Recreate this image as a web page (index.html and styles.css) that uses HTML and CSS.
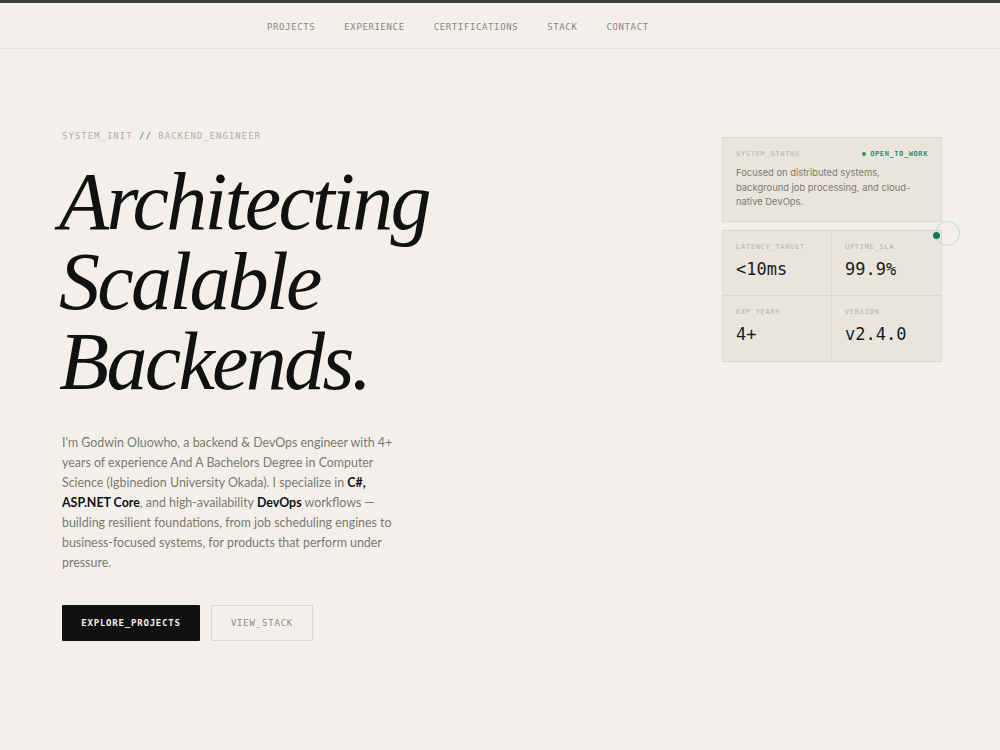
FILE: index.html
```html
<!DOCTYPE html>
<html>
<head>
<meta charset="utf-8">
<link rel="stylesheet" href="styles.css">
</head>
<body>
<div class="topbar"></div>
<header class="nav">
  <a>PROJECTS</a>
  <a>EXPERIENCE</a>
  <a>CERTIFICATIONS</a>
  <a>STACK</a>
  <a>CONTACT</a>
</header>
<main class="hero">
  <section class="intro">
    <div class="eyebrow">SYSTEM_INIT <span class="slash">//</span> BACKEND_ENGINEER</div>
    <h1 class="title">Architecting<br>Scalable<br>Backends.</h1>
    <p class="lead">I'm Godwin Oluowho, a backend &amp; DevOps engineer with 4+ years of experience And A Bachelors Degree in Computer Science (Igbinedion University Okada). I specialize in <b>C#,</b> <b>ASP.NET Core</b>, and high-availability <b>DevOps</b> workflows — building resilient foundations, from job scheduling engines to business-focused systems, for products that perform under pressure.</p>
    <div class="actions">
      <a class="btn primary">EXPLORE_PROJECTS</a>
      <a class="btn ghost">VIEW_STACK</a>
    </div>
  </section>
  <aside class="panel">
    <div class="status">
      <div class="status-head">
        <span class="label">SYSTEM_STATUS</span>
        <span class="open"><span class="dot"></span>OPEN_TO_WORK</span>
      </div>
      <p class="status-text">Focused on distributed systems, background job processing, and cloud-native DevOps.</p>
    </div>
    <div class="stats">
      <div class="stat"><span class="label">LATENCY_TARGET</span><span class="value">&lt;10ms</span></div>
      <div class="stat"><span class="label">UPTIME_SLA</span><span class="value">99.9%</span></div>
      <div class="stat"><span class="label">EXP_YEARS</span><span class="value">4+</span></div>
      <div class="stat"><span class="label">VERSION</span><span class="value">v2.4.0</span></div>
      <div class="ping"><span class="ping-dot"></span></div>
    </div>
  </aside>
</main>
</body>
</html>
```
FILE: styles.css
```css
* { box-sizing: border-box; }
html, body { margin: 0; padding: 0; }
body {
  background: #f3f0eb;
  font-family: Lato, "DejaVu Sans", sans-serif;
  color: #111;
  width: 1000px;
  height: 750px;
  overflow: hidden;
}
.topbar { height: 3px; background: #3b3b3b; }
.nav {
  height: 46px;
  display: flex;
  align-items: center;
  gap: 29px;
  padding: 2px 0 0 267px;
  border-bottom: 1px solid #e4e0d9;
  font-family: "DejaVu Sans Mono", monospace;
  font-size: 9px;
  letter-spacing: 0.62px;
  color: #8a857d;
}
.nav a { display: block; }
.hero {
  display: flex;
  justify-content: space-between;
  padding: 81px 58px 0 62px;
}
.intro { width: 400px; }
.eyebrow {
  font-family: "DejaVu Sans Mono", monospace;
  font-size: 9px;
  letter-spacing: 1px;
  color: #b2ada5;
  line-height: 12px;
}
.eyebrow .slash { color: #2f8c78; }
.title {
  margin: 20px 0 0 -3px;
  font-family: "Liberation Serif", serif;
  font-style: italic;
  font-weight: 400;
  font-size: 82px;
  line-height: 80px;
  letter-spacing: -2.7px;
  color: #111;
}
.lead {
  margin: 31px 0 0;
  width: 340px;
  font-size: 12.4px;
  line-height: 20px;
  color: #7d786f;
}
.lead b { font-weight: 700; color: #111; }
.actions {
  margin-top: 32px;
  display: flex;
  gap: 11px;
}
.btn {
  display: flex;
  align-items: center;
  justify-content: center;
  height: 36px;
  font-family: "DejaVu Sans Mono", monospace;
  font-size: 9px;
  letter-spacing: 0.8px;
}
.btn.primary {
  width: 138px;
  background: #111;
  color: #f3f0eb;
  font-weight: 700;
  border-radius: 1px;
}
.btn.ghost {
  width: 102px;
  border: 1px solid #dcd7cf;
  color: #8f8a82;
}
.panel {
  width: 220px;
  margin-top: 7px;
  display: flex;
  flex-direction: column;
  gap: 8px;
}
.status {
  background: #e9e5dd;
  border: 1px solid #dcd7cf;
  padding: 12px 13px 11px 13px;
}
.status-head {
  display: flex;
  justify-content: space-between;
  align-items: center;
}
.label {
  font-family: "DejaVu Sans Mono", monospace;
  font-size: 7px;
  letter-spacing: 0.7px;
  color: #b5b0a8;
}
.open {
  display: flex;
  align-items: center;
  gap: 4px;
  font-family: "DejaVu Sans Mono", monospace;
  font-size: 7px;
  letter-spacing: 0.6px;
  color: #2f8c78;
  font-weight: 700;
}
.open .dot {
  width: 4px; height: 4px; border-radius: 50%;
  background: #2f8c78;
}
.status-text {
  margin: 8px 0 0;
  font-family: Inter, "DejaVu Sans", sans-serif;
  font-size: 9.4px;
  line-height: 14.5px;
  color: #7d786f;
}
.stats {
  position: relative;
  display: grid;
  grid-template-columns: 1fr 1fr;
  background: #e9e5dd;
  border: 1px solid #dcd7cf;
}
.stat {
  height: 65px;
  padding: 12px 13px;
  display: flex;
  flex-direction: column;
  gap: 8px;
  border-right: 1px solid #dcd7cf;
  border-bottom: 1px solid #dcd7cf;
}
.stat:nth-child(2n) { border-right: 0; }
.stat:nth-child(3), .stat:nth-child(4) { border-bottom: 0; }
.value {
  font-family: "DejaVu Sans Mono", monospace;
  font-size: 17px;
  color: #1a1a1a;
  line-height: 20px;
}
.ping {
  position: absolute;
  top: -10px;
  right: -19px;
  width: 25px;
  height: 25px;
  border-radius: 50%;
  border: 1px solid #b7ddd3;
}
.ping-dot {
  position: absolute;
  left: -3px;
  top: 10px;
  width: 7px;
  height: 7px;
  border-radius: 50%;
  background: #0d7a62;
}
```
